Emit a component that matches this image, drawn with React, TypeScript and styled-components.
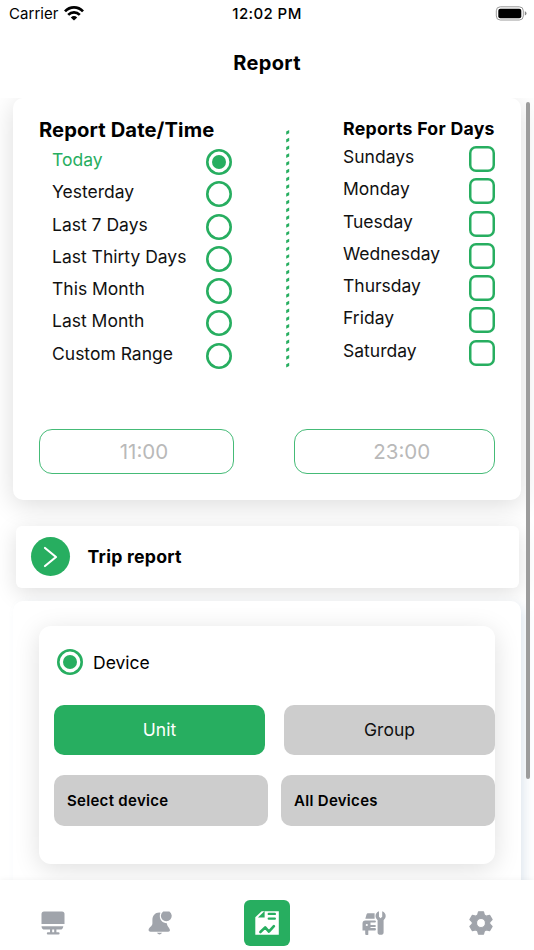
import React, { useState } from "react";
import styled, { createGlobalStyle } from "styled-components";

const GREEN = "#27ae60";

const GlobalStyle = createGlobalStyle`
  * { box-sizing: border-box; }
  body {
    margin: 0;
    background: #fff;
    color: #000;
    font-family: Inter, "Liberation Sans", sans-serif;
  }
  button, input { font-family: inherit; color: inherit; }
`;

const Screen = styled.div`
  width: 534px;
  height: 950px;
  display: flex;
  flex-direction: column;
  overflow: hidden;
  background: #fff;
`;

const StatusBar = styled.div`
  height: 28px;
  flex: none;
  display: grid;
  grid-template-columns: 1fr auto 1fr;
  align-items: center;
  padding: 0 7px 0 9px;
  font-size: 15px;
  line-height: 28px;
`;

const Carrier = styled.div`
  display: flex;
  align-items: center;
  gap: 5px;
  letter-spacing: 0.05px;

  svg { margin-top: -2px; }
`;

const Clock = styled.div`
  margin-left: -2px;
  font-weight: 500;
  letter-spacing: 0.4px;
`;

const BatterySlot = styled.div`
  display: flex;
  justify-content: flex-end;
  margin-top: -2px;
`;

const Header = styled.h1`
  height: 70px;
  flex: none;
  margin: 0;
  text-align: center;
  font-size: 20px;
  line-height: 70px;
  font-weight: 650;
  letter-spacing: 0.35px;
`;

const Viewport = styled.main`
  position: relative;
  height: 782px;
  flex: none;
  overflow: hidden;
  padding: 0 13px;
`;

const ScrollThumb = styled.div`
  position: absolute;
  right: 4px;
  top: 4px;
  width: 4px;
  height: 677px;
  border-radius: 2px;
  background: #9c9c9c;
`;

const DateCard = styled.section`
  height: 402px;
  padding: 17px 26px 0;
  border-radius: 10px;
  background: #fff;
  box-shadow: 0 5px 26px rgba(0, 0, 0, 0.14);
`;

const Columns = styled.div`
  display: grid;
  grid-template-columns: 194px 1fr 152px;
  height: 314px;
`;

const Heading = styled.h2<{ $size: number; $height: number; $spacing: number }>`
  margin: 0;
  font-size: ${(p) => p.$size}px;
  line-height: ${(p) => p.$height}px;
  font-weight: 650;
  letter-spacing: ${(p) => p.$spacing}px;
  white-space: nowrap;
`;

const OptionList = styled.div<{ $top: number }>`
  padding-top: ${(p) => p.$top}px;
`;

const OptionRow = styled.label<{ $inset?: boolean; $active?: boolean }>`
  display: flex;
  justify-content: space-between;
  align-items: flex-start;
  height: 32.27px;
  padding: 0 ${(p) => (p.$inset ? "1px 0 13px" : "0")};
  color: ${(p) => (p.$active ? GREEN : "#111")};
  font-size: 17.5px;
  line-height: 22px;
  white-space: nowrap;
`;

const Radio = styled.span<{ $on?: boolean }>`
  flex: none;
  display: grid;
  place-items: center;
  width: 26px;
  height: 26px;
  box-shadow: inset 0 0 0 2.6px ${GREEN};
  border-radius: 50%;
  &::after {
    content: "";
    width: 14px;
    height: 14px;
    border-radius: 50%;
    background: ${(p) => (p.$on ? GREEN : "transparent")};
  }
`;

const CheckBox = styled.span`
  width: 26px;
  height: 26px;
  box-shadow: inset 0 0 0 2.5px ${GREEN};
  border-radius: 7px;
`;

const Divider = styled.svg`
  margin: 15px 0 0 52px;
`;

const TimeRow = styled.div`
  display: flex;
  justify-content: space-between;
`;

const TimeField = styled.input<{ $width: number }>`
  width: ${(p) => p.$width}px;
  height: 45px;
  padding: 0 0 0 15px;
  border: 1px solid #45bb77;
  border-radius: 13px;
  background: #fff;
  text-align: center;
  font-size: 20.5px;
  outline: none;
  &::placeholder { color: #b9b9b9; opacity: 1; }
`;

const TripCard = styled.section`
  display: flex;
  align-items: center;
  gap: 17.5px;
  height: 62px;
  margin: 26px 2.5px 13px 3px;
  padding: 0 0 1px 15px;
  border-radius: 6px;
  background: #fff;
  box-shadow: 0 5px 22px rgba(0, 0, 0, 0.13);
`;

const ArrowButton = styled.button`
  display: grid;
  place-items: center;
  width: 39px;
  height: 39px;
  padding: 0;
  border: 0;
  border-radius: 50%;
  background: ${GREEN};
`;

const DevicePanel = styled.section`
  height: 400px;
  padding: 25px 26px 0;
  border-radius: 10px;
  background: #fff;
  box-shadow: 5px 3px 12px -2px rgba(90, 130, 170, 0.2);
`;

const DeviceCard = styled.div`
  height: 238px;
  padding: 23px 0 0 15px;
  border-radius: 12px;
  background: #fff;
  box-shadow: 0 5px 26px rgba(0, 0, 0, 0.13);
`;

const DeviceOption = styled.label`
  display: flex;
  align-items: center;
  gap: 10px;
  height: 26px;
  margin: 0 0 30px 3px;
  font-size: 17.5px;
`;

const ButtonRow = styled.div<{ $gap: number }>`
  display: grid;
  grid-template-columns: 1fr 1fr;
  gap: ${(p) => p.$gap}px;
  margin-bottom: 20px;
`;

const UnitButton = styled.button<{ $active?: boolean }>`
  height: 50px;
  padding: 0 0 1px;
  border: 0;
  border-radius: 10px;
  background: ${(p) => (p.$active ? GREEN : "#cdcdcd")};
  color: ${(p) => (p.$active ? "#fff" : "#111")};
  font-size: 17.5px;
`;

const SelectButton = styled.button`
  height: 51px;
  padding: 0 0 0 13px;
  border: 0;
  border-radius: 10px;
  background: #cdcdcd;
  text-align: left;
  font-size: 15px;
  font-weight: 600;
  letter-spacing: 0.3px;
`;

const TabBar = styled.nav`
  position: relative;
  height: 70px;
  flex: none;
  display: grid;
  grid-template-columns: repeat(5, 1fr);
  padding-top: 16px;
  justify-items: center;
  background: #fff;
  box-shadow: 0 0 6px rgba(0, 0, 0, 0.06);
`;

const Tab = styled.button<{ $active?: boolean }>`
  display: grid;
  place-items: center;
  width: 46px;
  height: 46px;
  margin-top: 4px;
  padding: 0;
  border: 0;
  border-radius: 6px;
  background: ${(p) => (p.$active ? GREEN : "transparent")};
  color: ${(p) => (p.$active ? "#fff" : "#a0a4ab")};
`;

const ranges = ["Today", "Yesterday", "Last 7 Days", "Last Thirty Days", "This Month", "Last Month", "Custom Range"];
const days = ["Sundays", "Monday", "Tuesday", "Wednesday", "Thursday", "Friday", "Saturday"];

const WifiIcon = () => (
  <svg width="20" height="15" viewBox="0 0 20 15" fill="none" stroke="#000" strokeWidth="2.7">
    <path d="M1 5.4C6 .1 14 .1 19 5.4" />
    <path d="M4.2 8.9c3.3-3.3 8.3-3.3 11.6 0" />
    <path d="M10 14.6 6.8 11.4q3.2-2.6 6.4 0z" fill="#000" stroke="none" />
  </svg>
);

const BatteryIcon = () => (
  <svg width="32" height="15" viewBox="0 0 32 15">
    <rect x="1.3" y=".8" width="27" height="13.2" rx="4" fill="none" stroke="#999" strokeWidth="1" />
    <rect x="3.3" y="2.7" width="23" height="9.5" rx="2" />
    <path d="M29.8 5.2q1.7.6 1.7 2.2t-1.7 2.2z" fill="#888" />
  </svg>
);

const MonitorIcon = () => (
  <svg width="24" height="24" viewBox="0 0 24 24" fill="currentColor">
    <path d="M3 .4h18q2.5 0 2.5 2.5v10H.5v-10Q.5.4 3 .4z" />
    <path d="M.5 15.2h21.8q-.4 3.4-3 3.4H3.5Q.8 18.6.5 15.2z" />
    <path d="M9 18h2.2v4H9zM13.2 18h2.2v4h-2.2z" />
    <rect x="5.8" y="21.3" width="12.8" height="2.2" rx="1.1" />
  </svg>
);

const BellIcon = () => (
  <svg width="24" height="24" viewBox="0 0 24 24" fill="currentColor">
    <path d="M15.2.4h6.2a5.4 5.4 0 1 1-6.2 0z" />
    <path d="M11.3 1.6C7 1.6 4.4 5 4.4 9v3.3C4.4 15.6.6 16.4.6 19c0 1.2.8 1.7 1.9 1.7h17.6c1.6 0 2.2-1 1.7-2.2-.7-2-2.7-3-3-6.2-4.2-.4-7-3.2-7-7.3 0-1.3.2-2.3.7-3.3z" />
    <path d="M8.8 21.8h5.4q-2.7 3.2-5.4 0z" />
  </svg>
);

const ReportIcon = () => (
  <svg width="24" height="24" viewBox="0 0 24 24">
    <path d="M6.7.3h17.1v23.4H.3V6.3z" fill="#fff" />
    <path d="M9.6 0v6.5H2.9z" fill={GREEN} />
    <path d="M13.8 2.9h6M13.8 7.6h6" stroke={GREEN} strokeWidth="2.4" strokeLinecap="round" />
    <path d="m5.4 21 4.8-4.6 3.7 4.2 5-5.5" fill="none" stroke={GREEN} strokeWidth="2.6" strokeLinecap="round" strokeLinejoin="round" />
  </svg>
);

const ServiceIcon = () => (
  <svg width="24" height="24" viewBox="0 0 24 24" fill="currentColor">
    <path d="M5.8 2.2h6.8v5.6H3.3l1.2-4.2q.4-1.4 1.3-1.4z" />
    <path d="M3.4 9.6h9.5q1 0 1 1t-1 1H8.5v2.3h4.4q1 0 1 1t-1 1H8.5v1h4.4q1 0 1 1v.6q0 1-1 1H6.3v4.3q-3.1 1.2-3.1-1.4v-2.9H.5v-6.9q0-3 2.9-3z" />
    <circle cx="4.8" cy="14" r="1.1" fill="#fff" />
    <path d="M17 .3v5.4l1.6 1.6 1.6-1.6V.3q3.5 1.3 3.5 4.9 0 2.4-2.1 4.1v12.1q0 2.3-3 2.3t-3-2.3V9.3q-2.1-1.7-2.1-4.1 0-3.6 3.5-4.9z" />
  </svg>
);

const GearIcon = () => (
  <svg width="24" height="24" viewBox="0 0 24 24" fill="currentColor">
    <path fillRule="evenodd" d="M9.5.8h5l.9 3.3 1.9 1.1 3.3-.9 2.5 4.3-2.4 2.4v2l2.4 2.4-2.5 4.3-3.3-.9-1.9 1.1-.9 3.3h-5l-.9-3.3-1.9-1.1-3.3.9-2.5-4.3L3.3 13v-2L.9 8.6l2.5-4.3 3.3.9 1.9-1.1zM12 7.5a4.5 4.5 0 1 0 0 9 4.5 4.5 0 0 0 0-9z" stroke="currentColor" strokeWidth="1.2" strokeLinejoin="round" />
  </svg>
);

const tabs = [MonitorIcon, BellIcon, ReportIcon, ServiceIcon, GearIcon];

export default function App() {
  const [range, setRange] = useState("Today");
  return (
    <>
      <GlobalStyle />
      <Screen>
        <StatusBar>
          <Carrier>Carrier<WifiIcon /></Carrier>
          <Clock>12:02 PM</Clock>
          <BatterySlot><BatteryIcon /></BatterySlot>
        </StatusBar>
        <Header>Report</Header>
        <Viewport>
          <DateCard>
            <Columns>
              <div>
                <Heading $size={20.2} $height={30} $spacing={0.1}>Report Date/Time</Heading>
                <OptionList $top={4.1}>
                  {ranges.map((r) => (
                    <OptionRow key={r} $inset $active={r === range} onClick={() => setRange(r)}>
                      {r}
                      <Radio $on={r === range} />
                    </OptionRow>
                  ))}
                </OptionList>
              </div>
              <Divider width="5" height="240" viewBox="0 0 5 240">
                {Array.from({ length: 31 }, (_, i) => (
                  <path key={i} d={`M1.2 ${i * 7.76 + 1.5}l3-1.5v3.2l-3 1.5z`} fill={GREEN} />
                ))}
              </Divider>
              <div>
                <Heading $size={17.7} $height={28} $spacing={0.28}>Reports For Days</Heading>
                <OptionList $top={3.1}>
                  {days.map((d) => (
                    <OptionRow key={d}>
                      {d}
                      <CheckBox />
                    </OptionRow>
                  ))}
                </OptionList>
              </div>
            </Columns>
            <TimeRow>
              <TimeField $width={195} placeholder="11:00" />
              <TimeField $width={201.5} placeholder="23:00" />
            </TimeRow>
          </DateCard>
          <TripCard>
            <ArrowButton aria-label="Open trip report">
              <svg width="16" height="22" viewBox="0 0 16 22" fill="none" stroke="#fff" strokeWidth="2.2" strokeLinecap="round" strokeLinejoin="round">
                <path d="m2 2 11 9-11 9" />
              </svg>
            </ArrowButton>
            <Heading $size={17.7} $height={24} $spacing={0.25}>Trip report</Heading>
          </TripCard>
          <DevicePanel>
            <DeviceCard>
              <DeviceOption><Radio $on />Device</DeviceOption>
              <ButtonRow $gap={19}>
                <UnitButton $active>Unit</UnitButton>
                <UnitButton>Group</UnitButton>
              </ButtonRow>
              <ButtonRow $gap={13}>
                <SelectButton>Select device</SelectButton>
                <SelectButton>All Devices</SelectButton>
              </ButtonRow>
            </DeviceCard>
          </DevicePanel>
          <ScrollThumb />
        </Viewport>
        <TabBar>
          {tabs.map((Icon, i) => (
            <Tab key={i} $active={i === 2}><Icon /></Tab>
          ))}
        </TabBar>
      </Screen>
    </>
  );
}
